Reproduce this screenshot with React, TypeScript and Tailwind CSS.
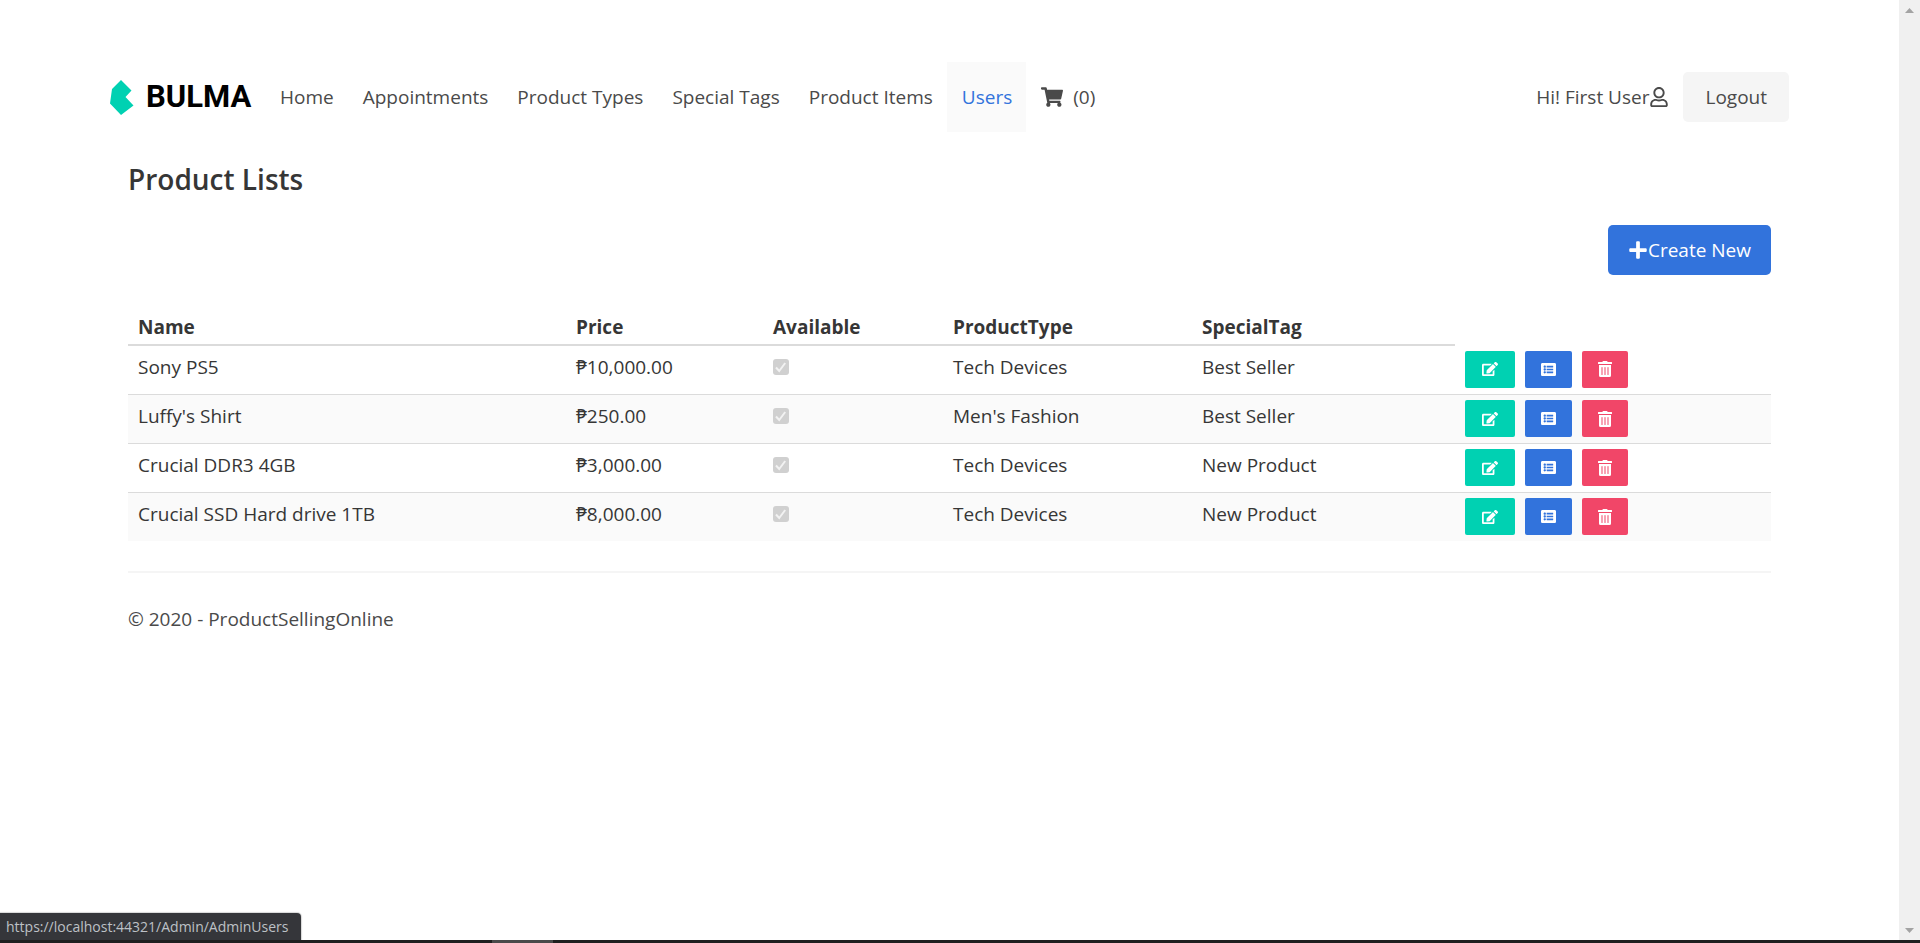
import { FaShoppingCart, FaRegUser, FaPlus, FaEdit, FaListAlt, FaTrashAlt } from "react-icons/fa";

type Product = { name: string; price: string; type: string; tag: string };

const products: Product[] = [
  { name: "Sony PS5", price: "₱10,000.00", type: "Tech Devices", tag: "Best Seller" },
  { name: "Luffy's Shirt", price: "₱250.00", type: "Men's Fashion", tag: "Best Seller" },
  { name: "Crucial DDR3 4GB", price: "₱3,000.00", type: "Tech Devices", tag: "New Product" },
  { name: "Crucial SSD Hard drive 1TB", price: "₱8,000.00", type: "Tech Devices", tag: "New Product" },
];

const links = ["Home", "Appointments", "Product Types", "Special Tags", "Product Items", "Users"];

function Logo() {
  return (
    <a href="#" aria-label="Bulma" className="flex w-[155px] items-center">
      <svg width="24" height="35" viewBox="0 0 24 35" className="shrink-0" aria-hidden="true">
        <path fill="#00d1b2" d="M0 23.5 2 9 11 0l10.5 10.5-6 6.5 8 8.5L11 35z" />
      </svg>
      <span className="ml-3 font-['Roboto',sans-serif] text-[31px] leading-9 font-bold text-black">BULMA</span>
    </a>
  );
}

function Navbar() {
  return (
    <nav className="flex h-[70px] items-stretch justify-between">
      <div className="flex items-stretch">
        <Logo />
        {links.map((l) => (
          <a
            key={l}
            href="#"
            className={
              l === "Users"
                ? "flex items-center bg-[#fafafa] pr-[14px] pl-[15px] text-[#3273dc]"
                : "flex items-center pr-[14px] pl-[15px]"
            }
          >
            {l}
          </a>
        ))}
        <a href="#" className="flex items-center pr-[14px] pl-[15px]">
          <FaShoppingCart className="mr-[10px] size-[22px]" />
          (0)
        </a>
      </div>
      <div className="flex items-center">
        <a href="#" className="mr-[14px] flex items-center">
          Hi! First User
          <FaRegUser className="size-5" />
        </a>
        <button type="button" className="h-[50px] rounded-[5px] bg-[#f5f5f5] px-[22px]">
          Logout
        </button>
      </div>
    </nav>
  );
}

function ProductTable() {
  return (
    <table className="w-full table-fixed border-collapse text-left text-[#363636]">
      <colgroup>
        <col className="w-[438px]" />
        <col className="w-[197px]" />
        <col className="w-[180px]" />
        <col className="w-[249px]" />
        <col className="w-[263px]" />
        <col />
      </colgroup>
      <thead>
        <tr className="h-[40px]">
          {["Name", "Price", "Available", "ProductType", "SpecialTag"].map((h) => (
            <th key={h} className="border-b-2 border-[#dbdbdb] px-[10px] pt-1 font-bold">
              {h}
            </th>
          ))}
          <td />
        </tr>
      </thead>
      <tbody>
        {products.map((p) => (
          <tr key={p.name} className="h-[49px] border-b border-[#dbdbdb] last:border-0 even:bg-[#fafafa]">
            <td className="px-[10px] pb-[6px]">{p.name}</td>
            <td className="px-[10px] pb-[6px]">{p.price}</td>
            <td className="px-[10px] pb-[6px]">
              <span className="relative block h-4 w-4">
                <input
                  type="checkbox"
                  checked
                  disabled
                  readOnly
                  aria-label={`${p.name} available`}
                  className="block size-4 appearance-none rounded-[3px] bg-[#d0d0d0]"
                />
                <svg viewBox="0 0 16 16" className="pointer-events-none absolute inset-0 size-4" aria-hidden="true">
                  <path d="M3 8.5 6.2 12 12.2 4" fill="none" stroke="#f2f2f2" strokeWidth="2" />
                </svg>
              </span>
            </td>
            <td className="px-[10px] pb-[6px]">{p.type}</td>
            <td className="px-[10px] pb-[6px]">{p.tag}</td>
            <td className="px-[10px]">
              <div className="flex gap-[10px] text-[15px] text-white">
                <button type="button" aria-label="Edit" className="flex h-[37px] w-[50px] items-center justify-center rounded-[2px] bg-[#00d1b2]">
                  <FaEdit className="size-4" />
                </button>
                <button type="button" aria-label="Details" className="flex h-[37px] w-[47px] items-center justify-center rounded-[2px] bg-[#3273dc]">
                  <FaListAlt />
                </button>
                <button type="button" aria-label="Delete" className="flex h-[37px] w-[46px] items-center justify-center rounded-[2px] bg-[#f14668]">
                  <FaTrashAlt className="size-4" />
                </button>
              </div>
            </td>
          </tr>
        ))}
      </tbody>
    </table>
  );
}

export default function App() {
  return (
    <div className="flex h-screen flex-col bg-white font-['Open_Sans','Noto_Sans',sans-serif] text-[19px] leading-[30px] text-[#4a4a4a]">
      <div className="relative flex min-h-0 flex-1">
        <div className="min-w-0 flex-1 overflow-hidden pt-[62px]">
          <div className="mx-auto max-w-[1679px]">
            <Navbar />
            <main className="px-[18px] pt-[30px]">
              <h1 className="text-[28px] leading-[34px] font-semibold text-[#363636]">Product Lists</h1>
              <div className="mt-[29px] flex justify-end">
                <button type="button" className="flex h-[50px] items-center rounded-[5px] bg-[#3273dc] px-5 text-white">
                  <FaPlus className="size-5" />
                  Create New
                </button>
              </div>
              <div className="mt-[30px]">
                <ProductTable />
              </div>
            </main>
            <footer className="mx-[18px] mt-[30px] border-t-2 border-[#f5f5f5] pt-[31px]">© 2020 - ProductSellingOnline</footer>
          </div>
        </div>
        <div className="flex w-[21px] flex-col items-center justify-between bg-[#f0f0f0] pt-2 pb-[7px]" aria-hidden="true">
          <svg width="9" height="5" viewBox="0 0 9 5"><path d="M4.5 0 9 5H0z" fill="#a3a3a3" /></svg>
          <svg width="9" height="5" viewBox="0 0 9 5"><path d="M4.5 5 9 0H0z" fill="#a3a3a3" /></svg>
        </div>
        <div className="absolute bottom-0 left-0 h-[27px] rounded-tr-[4px] bg-[#35363a] pr-3 pl-[6px] text-[14px] leading-7 text-[#bdc1c6] shadow-[0_0_1px_1px_#d8d8d8]">
          https://localhost:44321/Admin/AdminUsers
        </div>
      </div>
      <div className="relative z-10 flex h-[3px] shrink-0 bg-[#1f1f1f] pl-[492px]">
        <div className="w-[61px] bg-[#4a4a4a]" />
      </div>
    </div>
  );
}
